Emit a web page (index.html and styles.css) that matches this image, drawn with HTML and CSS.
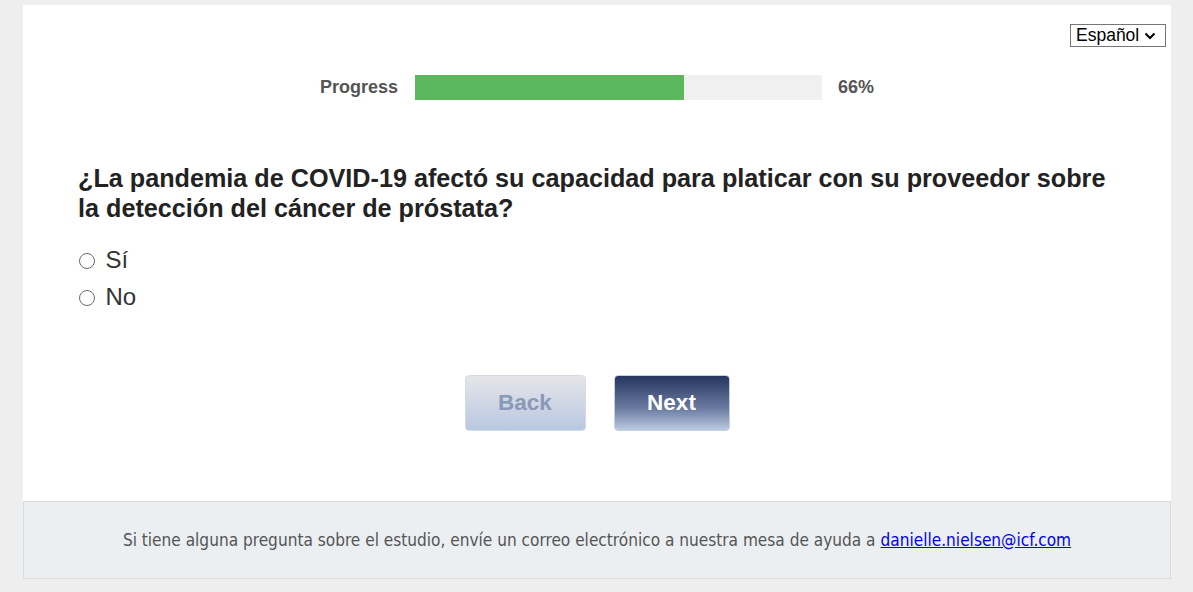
FILE: index.html
```html
<!DOCTYPE html>
<html lang="es">
<head>
<meta charset="utf-8">
<link rel="stylesheet" href="styles.css">
</head>
<body>
<div class="page">
  <main class="card">
    <div class="lang-row">
      <div class="lang-select">Español <svg class="chev" width="12" height="8" viewBox="0 0 12 8"><path d="M1.5 1.5 L6 6 L10.5 1.5" fill="none" stroke="#000" stroke-width="2"/></svg></div>
    </div>
    <div class="progress">
      <span class="progress-label">Progress</span>
      <div class="bar"><div class="fill" style="width:66%"></div></div>
      <span class="progress-value">66%</span>
    </div>
    <h1 class="question">¿La pandemia de COVID-19 afectó su capacidad para platicar con su proveedor sobre la detección del cáncer de próstata?</h1>
    <div class="options">
      <label class="option"><span class="radio"></span>Sí</label>
      <label class="option"><span class="radio"></span>No</label>
    </div>
    <div class="buttons">
      <button class="btn back">Back</button>
      <button class="btn next">Next</button>
    </div>
  </main>
  <footer class="footer">Si tiene alguna pregunta sobre el estudio, envíe un correo electrónico a nuestra mesa de ayuda a <a href="#">danielle.nielsen@icf.com</a></footer>
</div>
</body>
</html>
```
FILE: styles.css
```css
html, body {
  margin: 0;
  padding: 0;
  background: #eeeeee;
  font-family: "Liberation Sans", Arial, sans-serif;
}
.page {
  width: 1148px;
  margin: 5px 0 0 23px;
}
.card {
  background: #fff;
  height: 496px;
  display: flex;
  flex-direction: column;
}
.lang-row {
  display: flex;
  justify-content: flex-end;
  padding: 19px 5px 0 0;
}
.lang-select {
  box-sizing: border-box;
  width: 96px;
  height: 23px;
  border: 1px solid #767676;
  font-size: 17.5px;
  line-height: 21px;
  padding-left: 5px;
  color: #000;
  display: flex;
  align-items: center;
  gap: 5px;
}
.chev { margin-top: 1px; }
.progress {
  display: flex;
  align-items: center;
  margin-top: 28px;
  padding-left: 297px;
  height: 25px;
}
.progress-label {
  font-weight: bold;
  font-size: 18px;
  color: #555;
  width: 95px;
}
.bar {
  width: 407px;
  height: 25px;
  background: #f0f0f0;
}
.fill {
  height: 100%;
  background: #5cb85c;
}
.progress-value {
  font-weight: bold;
  font-size: 18px;
  color: #555;
  margin-left: 16px;
}
.question {
  margin: 63px 0 0 55px;
  width: 1045px;
  font-size: 25.2px;
  line-height: 30px;
  font-weight: bold;
  color: #222;
}
.options {
  margin: 23px 0 0 56px;
  display: flex;
  flex-direction: column;
  gap: 9px;
}
.option {
  display: flex;
  align-items: center;
  font-size: 24px;
  color: #333;
  height: 28px;
}
.radio {
  box-sizing: border-box;
  width: 16px;
  height: 16px;
  border: 1.5px solid #6b6b6b;
  border-radius: 50%;
  margin-right: 11px;
  margin-left: -0.5px;
  margin-top: 2px;
}
.buttons {
  display: flex;
  justify-content: center;
  gap: 28px;
  margin-top: 64px;
}
.btn {
  height: 56px;
  border: 1px solid #d6dbe3;
  border-radius: 4px;
  font-family: "Liberation Sans", Arial, sans-serif;
  font-weight: bold;
  font-size: 22.5px;
  padding: 0;
}
.back {
  width: 121px;
  color: #8a99b8;
  background: linear-gradient(#e6e6e8, #b8c8e2);
}
.next {
  width: 116px;
  color: #fff;
  background: linear-gradient(#27365f, #6a7aa0 60%, #bccae3);
  border-color: #c8d0de;
}
.footer {
  box-sizing: border-box;
  height: 78px;
  background: #eceff2;
  border: 1px solid #d8dcdf;
  display: flex;
  align-items: center;
  justify-content: center;
  font-family: "DejaVu Sans Condensed", "DejaVu Sans", sans-serif;
  font-size: 17.1px;
  color: #555;
  padding-bottom: 0;
}
.footer a {
  color: #0000ee;
  margin-left: 5px;
}
```
